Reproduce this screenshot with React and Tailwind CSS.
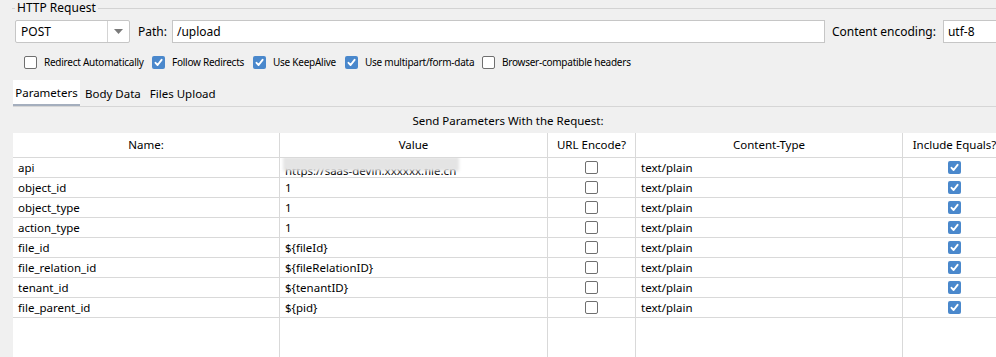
import React from 'react'

const rows = [
  { name: 'api', value: 'https://saas-devin.xxxxxx.file.cn', blur: true },
  { name: 'object_id', value: '1' },
  { name: 'object_type', value: '1' },
  { name: 'action_type', value: '1' },
  { name: 'file_id', value: '${fileId}' },
  { name: 'file_relation_id', value: '${fileRelationID}' },
  { name: 'tenant_id', value: '${tenantID}' },
  { name: 'file_parent_id', value: '${pid}' },
]

const grid = 'grid grid-cols-[267px_268px_88px_267px_104px]'

function Check({ checked }) {
  if (checked) {
    return (
      <div className="w-[13px] h-[13px] rounded-[2px] bg-[#4a88cc] flex items-center justify-center shrink-0">
        <svg width="11" height="11" viewBox="0 0 11 11">
          <path d="M2.5 5.8 L4.6 8 L8.6 2.8" stroke="white" strokeWidth="1.9" fill="none" strokeLinecap="round" strokeLinejoin="round" />
        </svg>
      </div>
    )
  }
  return <div className="w-[13px] h-[13px] rounded-[2px] border border-[#6f6f6f] bg-white shrink-0" />
}

function Option({ checked, label, width }) {
  return (
    <div className={`flex items-center gap-[7px] shrink-0 ${width}`}>
      <Check checked={checked} />
      <span className="text-[10px] tracking-[-0.25px] leading-none whitespace-nowrap">{label}</span>
    </div>
  )
}

export default function App() {
  return (
    <div className="w-[996px] h-[357px] bg-[#f0f0f0] overflow-hidden font-['Noto_Sans',sans-serif] text-[11.5px] text-black flex flex-col">
      {/* group title */}
      <div className="flex items-center h-[16px] pl-[12px] shrink-0">
        <div className="w-[3px] h-px bg-[#d3d3d3]" />
        <span className="px-[2px] leading-none text-[12px]">HTTP Request</span>
        <div className="flex-1 h-px bg-[#d3d3d3]" />
      </div>

      {/* method / path / encoding */}
      <div className="flex items-center h-[23px] mt-[4px] pl-[15px] shrink-0 text-[12px]">
        <div className="w-[115px] h-[23px] border border-[#c6c6c6] rounded-[2px] bg-white flex items-center shrink-0">
          <span className="flex-1 pl-[5px]">POST</span>
          <div className="w-[22px] h-full border-l border-[#d4d4d4] flex items-center justify-center">
            <svg width="9" height="5" viewBox="0 0 9 5">
              <path d="M0 0 L9 0 L4.5 5 Z" fill="#7a7a7a" />
            </svg>
          </div>
        </div>
        <span className="ml-[8px]">Path:</span>
        <div className="ml-[5px] w-[653px] h-[23px] border border-[#c6c6c6] bg-white flex items-center pl-[4px] shrink-0">/upload</div>
        <span className="ml-[7px] whitespace-nowrap">Content encoding:</span>
        <div className="ml-[7px] w-[80px] h-[23px] border border-[#c6c6c6] bg-white flex items-center pl-[4px] shrink-0">utf-8</div>
      </div>

      {/* options */}
      <div className="flex items-center h-[14px] mt-[12px] pl-[24px] shrink-0">
        <Option label="Redirect Automatically" width="w-[128px]" />
        <Option checked label="Follow Redirects" width="w-[101px]" />
        <Option checked label="Use KeepAlive" width="w-[92px]" />
        <Option checked label="Use multipart/form-data" width="w-[137px]" />
        <Option label="Browser-compatible headers" width="w-[150px]" />
      </div>

      {/* tabs */}
      <div className="mt-[11px] ml-[13px] flex border-b border-[#d6d6d6] shrink-0">
        <div className="h-[26px] pt-[2px] w-[67px] bg-white border-b-2 border-[#a5afbe] flex items-center justify-center">Parameters</div>
        <div className="h-[26px] pt-[2px] px-[5px] flex items-center">Body Data</div>
        <div className="h-[26px] pt-[2px] px-[4px] flex items-center">Files Upload</div>
      </div>

      {/* title */}
      <div className="h-[26px] pt-[2px] ml-[13px] w-[990px] flex items-center justify-center shrink-0">
        Send Parameters With the Request:
      </div>

      {/* table */}
      <div className="ml-[13px] w-[994px] flex-1 bg-white flex flex-col">
        <div className={`${grid} h-[25px] border-b border-[#d9d9d9]`}>
          {['Name:', 'Value', 'URL Encode?', 'Content-Type', 'Include Equals?'].map((h) => (
            <div key={h} className="border-r border-[#d9d9d9] flex items-center justify-center whitespace-nowrap">{h}</div>
          ))}
        </div>
        {rows.map((r) => (
          <div key={r.name} className={`${grid} h-[20px] border-b border-[#d9d9d9]`}>
            <div className="border-r border-[#d9d9d9] flex items-center pl-[5px]">{r.name}</div>
            <div className="relative border-r border-[#d9d9d9] flex items-center pl-[5px] overflow-hidden">
              <span className={r.blur ? 'mt-[6px] whitespace-nowrap' : ''}>{r.value}</span>
              {r.blur && (
                <div className="absolute left-[3px] top-[-1px] w-[176px] h-[14px] bg-[#e4e4e4] blur-[1.5px]" />
              )}
            </div>
            <div className="border-r border-[#d9d9d9] flex items-center justify-center">
              <Check />
            </div>
            <div className="border-r border-[#d9d9d9] flex items-center pl-[5px]">text/plain</div>
            <div className="border-r border-[#d9d9d9] flex items-center justify-center">
              <Check checked />
            </div>
          </div>
        ))}
        <div className={`${grid} flex-1`}>
          <div className="border-r border-[#d9d9d9]" />
          <div className="border-r border-[#d9d9d9]" />
          <div className="border-r border-[#d9d9d9]" />
          <div className="border-r border-[#d9d9d9]" />
          <div className="border-r border-[#d9d9d9]" />
        </div>
      </div>
    </div>
  )
}
